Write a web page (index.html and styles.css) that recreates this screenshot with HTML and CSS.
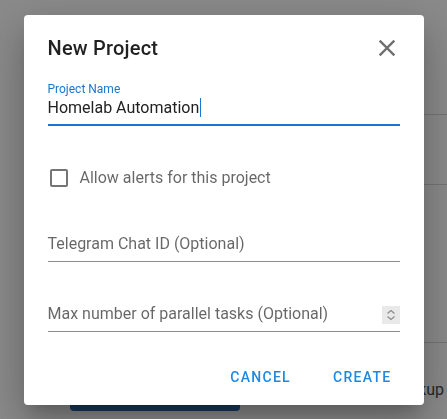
FILE: index.html
```html
<!DOCTYPE html>
<html lang="en">
<head>
  <meta charset="UTF-8">
  <meta name="viewport" content="width=device-width, initial-scale=1.0">
  <title>New Project</title>
  <link rel="stylesheet" href="styles.css">
</head>
<body>
  <!-- Page behind the dialog -->
  <div class="page">
    <div class="bg-row bg-row-1"></div>
    <div class="bg-row bg-row-2"></div>
    <div class="bg-row bg-row-3"></div>
    <div class="bg-footer">
      <button class="bg-btn"></button>
      <span class="bg-text">Backup</span>
    </div>
  </div>

  <!-- New project dialog -->
  <div class="overlay">
    <div class="dialog">
      <div class="dialog-header">
        <h2 class="dialog-title">New Project</h2>
        <svg class="close-icon" viewBox="0 0 24 24" width="28" height="28">
          <path d="M19 6.41L17.59 5 12 10.59 6.41 5 5 6.41 10.59 12 5 17.59 6.41 19 12 13.41 17.59 19 19 17.59 13.41 12z"/>
        </svg>
      </div>

      <div class="dialog-body">
        <div class="field field-focused">
          <div class="field-label">Project Name</div>
          <div class="field-input">Homelab Automation<span class="caret"></span></div>
        </div>

        <label class="check-row">
          <span class="check-box"></span>
          <span class="check-text">Allow alerts for this project</span>
        </label>

        <div class="field field-telegram">
          <div class="field-input placeholder">Telegram Chat ID (Optional)</div>
        </div>

        <div class="field field-tasks">
          <div class="field-input placeholder">
            <span>Max number of parallel tasks (Optional)</span>
            <span class="spinner">
              <svg viewBox="0 0 18 18" width="18" height="18">
                <path d="M5.5 7.5L9 4.5 12.5 7.5M5.5 10.5L9 13.5 12.5 10.5" fill="none" stroke="#8a8a8a" stroke-width="1.2"/>
              </svg>
            </span>
          </div>
        </div>
      </div>

      <div class="dialog-actions">
        <button class="text-btn">Cancel</button>
        <button class="text-btn">Create</button>
      </div>
    </div>
  </div>
</body>
</html>
```

FILE: styles.css
```css
body {
  margin: 0;
  font-family: Roboto, "Liberation Sans", sans-serif;
  background-color: #fff;
  overflow: hidden;
}
.page {
  height: 419px;
}
.bg-row {
  border-bottom: 1px solid #d6d6d6;
  margin-left: 300px;
}
.bg-row-1 {
  height: 114px;
}
.bg-row-2 {
  height: 69px;
}
.bg-row-3 {
  height: 157px;
}
.bg-footer {
  display: flex;
  justify-content: space-between;
  align-items: flex-end;
  margin-top: 32px;
  padding: 0 3px 0 70px;
}
.bg-btn {
  width: 170px;
  height: 36px;
  border: none;
  border-radius: 4px;
  background-color: #2c68ae;
}
.bg-text {
  font-size: 16px;
  color: #4a4a4a;
  margin-bottom: 12px;
}
.overlay {
  position: fixed;
  inset: 0;
  background-color: rgba(0, 0, 0, 0.46);
  display: flex;
  align-items: center;
  justify-content: center;
}
.dialog {
  width: 400px;
  background-color: #fff;
  border-radius: 4px;
  box-shadow: 0 11px 15px -7px rgba(0,0,0,0.2), 0 24px 38px 3px rgba(0,0,0,0.14), 0 9px 46px 8px rgba(0,0,0,0.12);
}
.dialog-header {
  display: flex;
  align-items: center;
  justify-content: space-between;
  padding: 17px 23px 0 24px;
}
.dialog-title {
  margin: 0;
  font-size: 20px;
  font-weight: 500;
  line-height: 32px;
  color: rgba(0, 0, 0, 0.87);
  letter-spacing: 0.2px;
}
.close-icon {
  fill: #6f6f6f;
}
.dialog-body {
  padding: 0 24px;
}
.field {
  color: rgba(0, 0, 0, 0.87);
}
.field-focused {
  margin-top: 17px;
}
.field-label {
  font-size: 12px;
  line-height: 16px;
  color: #1976d2;
}
.field-input {
  display: flex;
  align-items: center;
  justify-content: space-between;
  font-size: 16px;
  line-height: 20px;
  padding-bottom: 7px;
  border-bottom: 1px solid #8c8c8c;
}
.field-focused .field-input {
  justify-content: flex-start;
  margin-top: 1px;
  padding-bottom: 6px;
  border-bottom: 2px solid #1976d2;
  color: #222;
}
.caret {
  display: inline-block;
  width: 1px;
  height: 19px;
  margin-left: 1px;
  background-color: #1976d2;
}
.placeholder {
  color: rgba(0, 0, 0, 0.6);
}
.check-row {
  display: flex;
  align-items: center;
  height: 24px;
  margin-top: 40px;
  padding-left: 2px;
}
.check-box {
  width: 14px;
  height: 14px;
  border: 2px solid #757575;
  border-radius: 2px;
}
.check-text {
  margin-left: 12px;
  font-size: 16px;
  color: rgba(0, 0, 0, 0.6);
}
.field-telegram {
  margin-top: 44px;
}
.field-tasks {
  margin-top: 42px;
}
.spinner {
  display: flex;
  width: 18px;
  height: 18px;
  margin-top: 2px;
  background-color: #e9e9e9;
}
.dialog-actions {
  display: flex;
  justify-content: flex-end;
  gap: 26px;
  padding: 29px 24px 12px 0;
}
.text-btn {
  border: none;
  background: none;
  padding: 6px 8px;
  font-family: Roboto, "Liberation Sans", sans-serif;
  font-size: 14px;
  font-weight: 500;
  line-height: 20px;
  letter-spacing: 1.3px;
  text-transform: uppercase;
  color: #1e88e5;
}
```
